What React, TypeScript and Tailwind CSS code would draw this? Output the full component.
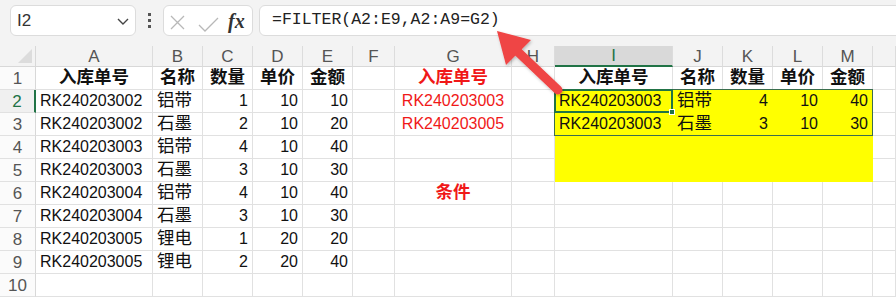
import React from "react";

const FONT = '"Liberation Sans", "Noto Sans CJK SC", sans-serif';

type Cell = { v: string; cjk?: boolean; align?: "l" | "r" | "c"; bold?: boolean; red?: boolean };

const colsLetters = ["A", "B", "C", "D", "E", "F", "G", "H", "I", "J", "K", "L", "M", ""];

const left = (v: string): Cell => ({ v, align: "l" });
const cj = (v: string): Cell => ({ v, cjk: true, align: "l" });
const num = (v: string): Cell => ({ v, align: "r" });
const hd = (v: string, red = false): Cell => ({ v, cjk: true, align: "c", bold: true, red });
const E: Cell = { v: "" };

const aData = [
  ["RK240203002", "铝带", "1", "10", "10"],
  ["RK240203002", "石墨", "2", "10", "20"],
  ["RK240203003", "铝带", "4", "10", "40"],
  ["RK240203003", "石墨", "3", "10", "30"],
  ["RK240203004", "铝带", "4", "10", "40"],
  ["RK240203004", "石墨", "3", "10", "30"],
  ["RK240203005", "锂电", "1", "20", "20"],
  ["RK240203005", "锂电", "2", "20", "40"],
];

function buildRows(): Cell[][] {
  const rows: Cell[][] = [];
  rows.push([
    hd("入库单号"), hd("名称"), hd("数量"), hd("单价"), hd("金额"), E,
    hd("入库单号", true), E,
    hd("入库单号"), hd("名称"), hd("数量"), hd("单价"), hd("金额"), E,
  ]);
  const gVals: Record<number, Cell> = {
    0: { v: "RK240203003", align: "c", red: true },
    1: { v: "RK240203005", align: "c", red: true },
    4: { v: "条件", cjk: true, align: "c", bold: true, red: true },
  };
  const iVals: Record<number, string[]> = {
    0: ["RK240203003", "铝带", "4", "10", "40"],
    1: ["RK240203003", "石墨", "3", "10", "30"],
  };
  for (let r = 0; r < 9; r++) {
    const d = aData[r];
    const row: Cell[] = [];
    if (d) {
      row.push(left(d[0]), cj(d[1]), num(d[2]), num(d[3]), num(d[4]));
    } else {
      row.push(E, E, E, E, E);
    }
    row.push(E);
    row.push(gVals[r] ?? E);
    row.push(E);
    const iv = iVals[r];
    if (iv) {
      row.push(left(iv[0]), cj(iv[1]), num(iv[2]), num(iv[3]), num(iv[4]));
    } else {
      row.push(E, E, E, E, E);
    }
    row.push(E);
    rows.push(row);
  }
  return rows;
}

function CellView({ c, yellow, children }: { c: Cell; yellow: boolean; children?: React.ReactNode }) {
  const justify =
    c.align === "r" ? "justify-end pr-[4px]" : c.align === "c" ? "justify-center" : "justify-start pl-[4px]";
  return (
    <div
      className={`relative flex items-center overflow-visible whitespace-nowrap border-r border-b leading-none ${justify} ${
        yellow ? "bg-[#ffff00] border-[#ffff00]" : "bg-white border-[#e1e1e1]"
      } ${c.red ? "text-[#f01818]" : "text-[#111]"} ${c.bold ? "font-bold" : ""} ${
        c.cjk ? "text-[17.5px]" : "text-[16px]"
      }`}
    >
      {c.v}
      {children}
    </div>
  );
}

export default function App() {
  const rows = buildRows();
  return (
    <div className="relative w-[896px] h-[298px] overflow-hidden bg-white" style={{ fontFamily: FONT }}>
      {/* toolbar */}
      <div className="flex h-[46px] items-start bg-[#f3f3f3] pl-[10px] pt-[5px] overflow-hidden">
        <div className="flex h-[31px] w-[126px] shrink-0 items-center justify-between rounded-[6px] border border-[#dcdcdc] bg-white pl-[6px] pr-[5px]">
          <span className="text-[17px] text-[#333]">I2</span>
          <svg width="14" height="10" viewBox="0 0 14 10">
            <path d="M2 3 L7 8 L12 3" fill="none" stroke="#444" strokeWidth="1.4" />
          </svg>
        </div>
        <div className="flex h-[31px] w-[27px] shrink-0 flex-col items-center justify-center gap-[3px]">
          <div className="h-[3px] w-[3px] bg-[#555]" />
          <div className="h-[3px] w-[3px] bg-[#555]" />
          <div className="h-[3px] w-[3px] bg-[#555]" />
        </div>
        <div className="flex h-[31px] w-[90px] shrink-0 items-center rounded-[6px] border border-[#dcdcdc] bg-white">
          <svg width="90" height="29" viewBox="0 0 90 29" className="shrink-0">
            <path d="M7 10 L20 23 M20 10 L7 23" stroke="#b8b8b8" strokeWidth="1.3" fill="none" />
            <path d="M35 19 L41 25 L54 12" stroke="#b8b8b8" strokeWidth="1.3" fill="none" />
          </svg>
          <span
            className="-ml-[26px] text-[20px] font-bold italic text-[#333]"
            style={{ fontFamily: '"Liberation Serif", serif' }}
          >
            fx
          </span>
        </div>
        <div className="ml-[6px] flex h-[31px] w-[700px] shrink-0 items-center rounded-[6px] border border-[#dcdcdc] bg-white pl-[12px]">
          <span className="text-[16.5px] text-[#222]" style={{ fontFamily: '"Liberation Mono", monospace' }}>
            =FILTER(A2:E9,A2:A9=G2)
          </span>
        </div>
      </div>

      {/* grid */}
      <div className="grid grid-cols-[36px_117px_50px_50px_50px_50px_42px_117px_43px_118px_50px_50px_50px_50px_1fr] grid-rows-[21px_repeat(10,23px)]">
        <div className="relative border-r border-b border-[#d8d8d8] bg-[#f3f3f3]">
          <svg className="absolute bottom-[3px] right-[3px]" width="14" height="14" viewBox="0 0 14 14">
            <path d="M14 0 L14 14 L0 14 Z" fill="#dcdcdc" />
          </svg>
        </div>
        {colsLetters.map((l, i) => {
          const sel = l === "I";
          return (
            <div
              key={"h" + i}
              className={`flex items-center justify-center border-r border-[#dcdcdc] text-[17px] leading-none ${
                sel
                  ? "border-b-2 border-b-[#217346] bg-[#d9d9d9] text-[#217346]"
                  : "border-b border-b-[#d8d8d8] bg-[#f3f3f3] text-[#555]"
              }`}
            >
              {l}
            </div>
          );
        })}
        {rows.map((row, r) => (
          <React.Fragment key={"r" + r}>
            <div
              className={`flex items-center justify-center border-b border-[#e1e1e1] text-[17px] leading-none ${
                r === 1
                  ? "border-r-2 border-r-[#217346] bg-[#f0f0f0] text-[#217346]"
                  : "border-r border-r-[#d8d8d8] bg-[#fbfbfb] text-[#555]"
              }`}
            >
              {r + 1}
            </div>
            {row.map((c, ci) => {
              const yellow = r >= 1 && r <= 4 && ci >= 8 && ci <= 12;
              const isActive = r === 1 && ci === 8;
              return (
                <CellView key={ci} c={c} yellow={yellow}>
                  {isActive && (
                    <>
                      <div className="pointer-events-none absolute -left-px -top-px z-10 h-[47px] w-[319px] border border-[#3b6e4e]" />
                      <div className="pointer-events-none absolute -left-px -top-px z-20 h-[24px] w-[119px] border-2 border-[#217346]">
                        <div className="absolute -bottom-[4px] -right-[4px] h-[6px] w-[6px] border border-white bg-[#217346]" />
                      </div>
                    </>
                  )}
                </CellView>
              );
            })}
          </React.Fragment>
        ))}
      </div>

      {/* red arrow annotation */}
      <svg className="pointer-events-none absolute left-0 top-0 z-30" width="896" height="298" viewBox="0 0 896 298">
        <defs>
          <filter id="sh" x="-20%" y="-20%" width="140%" height="140%">
            <feDropShadow dx="1" dy="1.5" stdDeviation="1.5" floodColor="#000" floodOpacity="0.25" />
          </filter>
        </defs>
        <g filter="url(#sh)">
          <line x1="517" y1="51" x2="558" y2="90" stroke="#ef4444" strokeWidth="9" strokeLinecap="round" />
          <polygon points="497,31 531,40 506,65" fill="#ef4444" />
        </g>
      </svg>
    </div>
  );
}
